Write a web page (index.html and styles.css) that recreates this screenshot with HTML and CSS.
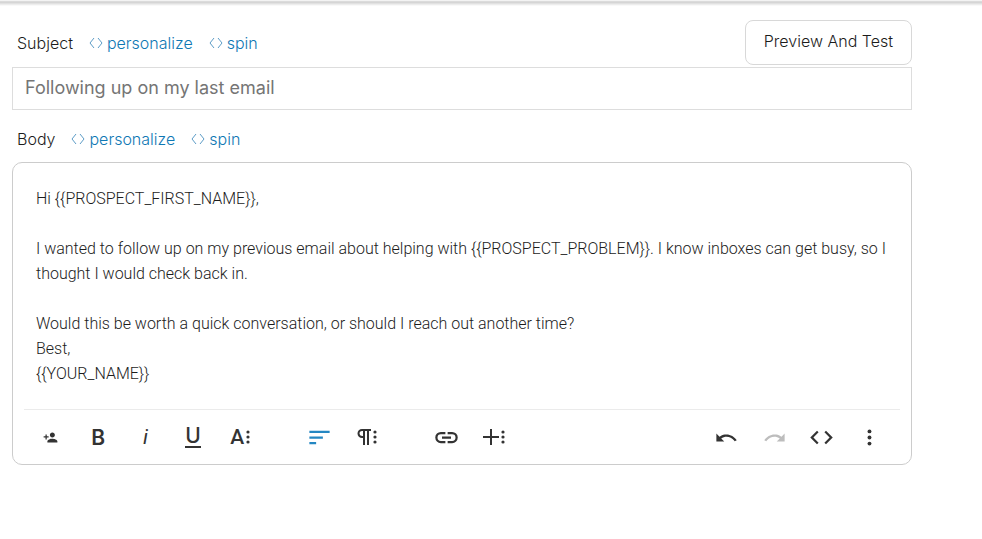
FILE: index.html
```html
<!DOCTYPE html>
<html lang="en">
<head>
  <meta charset="UTF-8">
  <meta name="viewport" content="width=device-width, initial-scale=1.0">
  <title>Email editor</title>
  <link rel="stylesheet" href="styles.css">
</head>
<body>
<svg class="sprite" aria-hidden="true">
  <symbol id="tag" viewBox="0 0 14 10"><path d="M5 0 1 5l4 5M9 0l4 5-4 5"/></symbol>
  <symbol id="dots" viewBox="0 0 4 14"><circle cx="2" cy="2" r="1.6"/><circle cx="2" cy="7" r="1.6"/><circle cx="2" cy="12" r="1.6"/></symbol>
</svg>
<div class="top-line"></div>

<form class="email-form">
  <div class="label-row subject-row">
    <label for="subject">Subject</label>
    <a href="#"><svg class="tag"><use href="#tag"/></svg>personalize</a>
    <a href="#"><svg class="tag"><use href="#tag"/></svg>spin</a>
    <button type="button" class="preview-btn">Preview And Test</button>
  </div>
  <textarea id="subject" class="subject" rows="1" placeholder="Following up on my last email"></textarea>

  <div class="label-row body-row">
    <span id="body-label">Body</span>
    <a href="#"><svg class="tag"><use href="#tag"/></svg>personalize</a>
    <a href="#"><svg class="tag"><use href="#tag"/></svg>spin</a>
  </div>

  <div class="editor">
    <div class="editor-text" contenteditable="true" role="textbox" aria-multiline="true" aria-labelledby="body-label" spellcheck="false">
      <p>Hi {{PROSPECT_FIRST_NAME}},</p>
      <p><br></p>
      <p>I wanted to follow up on my previous email about helping with {{PROSPECT_PROBLEM}}. I know inboxes can get busy, so I thought I would check back in.</p>
      <p><br></p>
      <p>Would this be worth a quick conversation, or should I reach out another time?</p>
      <p>Best,</p>
      <p>{{YOUR_NAME}}</p>
    </div>
    <div class="toolbar">
      <div class="group group-text">
        <button type="button" aria-label="Insert contact"><svg class="small" viewBox="0 0 24 24"><path d="M15 12c2.21 0 4-1.79 4-4s-1.79-4-4-4-4 1.79-4 4 1.79 4 4 4zM6 10V7H4v3H1v2h3v3h2v-3h3v-2zM15 14c-2.67 0-8 1.34-8 4v2h16v-2c0-2.66-5.33-4-8-4z"/></svg></button>
        <button type="button" class="bold" aria-label="Bold">B</button>
        <button type="button" class="italic" aria-label="Italic">i</button>
        <button type="button" class="underline" aria-label="Underline"><span>U</span></button>
        <button type="button" class="more-text" aria-label="More text">A<svg class="dots"><use href="#dots"/></svg></button>
      </div>
      <div class="group">
        <button type="button" class="active" aria-label="Align left"><svg viewBox="0 0 24 24"><path d="M3 6h18v2H3zM3 11h12v2H3zM3 16h6v2H3z"/></svg></button>
        <button type="button" aria-label="More paragraph"><svg class="pilcrow" viewBox="0 0 14 16"><path d="M14 1H5a3 3 0 0 0 0 7h2M7 1v15M11 1v15"/></svg><svg class="dots"><use href="#dots"/></svg></button>
      </div>
      <div class="group">
        <button type="button" aria-label="Insert link"><svg viewBox="0 0 24 24"><path d="M11 17H7A5 5 0 0 1 7 7h4v2H7a3 3 0 0 0 0 6h4zM17 7h-4v2h4a3 3 0 0 1 0 6h-4v2h4a5 5 0 0 0 0-10zM16 11H8v2h8z"/></svg></button>
        <button type="button" aria-label="More rich"><svg class="plus" viewBox="0 0 16 16"><path d="M7 0h2v7h7v2H9v7H7V9H0V7h7z"/></svg><svg class="dots"><use href="#dots"/></svg></button>
      </div>
      <div class="group group-misc">
        <button type="button" aria-label="Undo"><svg viewBox="0 0 24 24"><path d="M10.4 9.4c-1.7.3-3.2.9-4.6 2L3 8.5v7h7l-2.7-2.7c3.7-2.6 8.8-1.8 11.5 1.9.2.2.3.5.5.7l1.8-.9c-2.3-3.7-6.5-5.8-10.7-5.1z"/></svg></button>
        <button type="button" aria-label="Redo" disabled><svg viewBox="0 0 24 24"><path d="M13.6 9.4c1.7.3 3.2.9 4.6 2L21 8.5v7h-7l2.7-2.7c-3.7-2.6-8.8-1.8-11.5 1.9-.2.2-.3.5-.5.7l-1.8-.9c2.3-3.7 6.5-5.8 10.7-5.1z"/></svg></button>
        <button type="button" aria-label="Code view"><svg viewBox="0 0 24 24"><path d="M9.4 16.6 4.8 12l4.6-4.6L8 6l-6 6 6 6zM14.6 16.6l4.6-4.6-4.6-4.6L16 6l6 6-6 6z"/></svg></button>
        <button type="button" aria-label="More"><svg class="more"><use href="#dots"/></svg></button>
      </div>
    </div>
  </div>
</form>
</body>
</html>
```

FILE: styles.css
```css
* {
  box-sizing: border-box;
}
body {
  margin: 0;
  background-color: #fff;
  color: #1c1c1c;
  font-family: Inter, sans-serif;
  font-size: 16px;
  font-weight: 300;
}
.sprite {
  display: none;
}
.top-line {
  height: 6px;
  background: linear-gradient(#fff 0, #cfcfcf 2px, #fff 6px);
}
.email-form {
  padding: 14px 70px 20px 12px;
}
.label-row {
  display: flex;
  align-items: center;
  padding-left: 5px;
}
.label-row a {
  display: flex;
  align-items: center;
  gap: 4px;
  margin-left: 16px;
  color: #0f78b4;
  text-decoration: none;
}
.tag {
  width: 14px;
  height: 10px;
  fill: none;
  stroke: #5c9cc6;
}
.preview-btn {
  height: 45px;
  margin-left: auto;
  padding: 0 18px 4px;
  background-color: #fff;
  border: 1px solid #d8d8d8;
  border-radius: 8px;
  color: #1c1c1c;
  font: inherit;
}
.subject {
  display: block;
  width: 100%;
  height: 43px;
  margin-top: 2px;
  padding: 8px 12px;
  border: 1px solid #ddd;
  font-family: inherit;
  font-size: 18px;
  font-weight: 400;
  line-height: 24px;
  overflow: hidden;
  resize: none;
}
.subject::placeholder {
  color: #757575;
}
.body-row {
  height: 52px;
  padding-top: 6px;
}

/* Editor */
.editor {
  padding: 0 11px;
  border: 1px solid #ccc;
  border-radius: 10px;
}
.editor-text {
  padding: 23px 12px;
  color: #1c1c1c;
  font-family: Roboto, sans-serif;
  line-height: 25px;
  outline: none;
}
.editor-text p {
  margin: 0;
}
.toolbar {
  display: flex;
  gap: 32px;
  height: 55px;
  padding: 0 7px 0 3px;
  border-top: 1px solid #ebebeb;
}
.group {
  display: flex;
  width: 95px;
}
.group-text {
  width: 237px;
}
.group-misc {
  width: 190px;
  margin-left: auto;
}
.toolbar button {
  display: flex;
  flex: 1;
  align-items: center;
  justify-content: center;
  padding: 0;
  background: none;
  border: none;
  color: #333;
  font-family: Inter, sans-serif;
  font-size: 21px;
}
.toolbar svg {
  width: 27px;
  height: 27px;
  fill: currentColor;
}
.toolbar .small {
  width: 15px;
  height: 15px;
}
.toolbar .plus {
  width: 16px;
  height: 16px;
}
.toolbar .pilcrow {
  width: 14px;
  height: 16px;
  fill: none;
  stroke: currentColor;
  stroke-width: 2;
}
.toolbar .dots {
  width: 4px;
  height: 14px;
  margin-left: 2px;
}
.toolbar .more {
  width: 5px;
  height: 17px;
}
.toolbar .bold {
  font-weight: 600;
}
.toolbar .italic {
  font-family: Roboto, sans-serif;
  font-style: italic;
}
.underline span {
  border-bottom: 2px solid;
  font-weight: 500;
  line-height: 20px;
}
.toolbar .more-text {
  font-family: Roboto, sans-serif;
  font-weight: 500;
}
.toolbar .active {
  color: #2487c2;
}
.toolbar button:disabled {
  color: #bdbdbd;
}
```
